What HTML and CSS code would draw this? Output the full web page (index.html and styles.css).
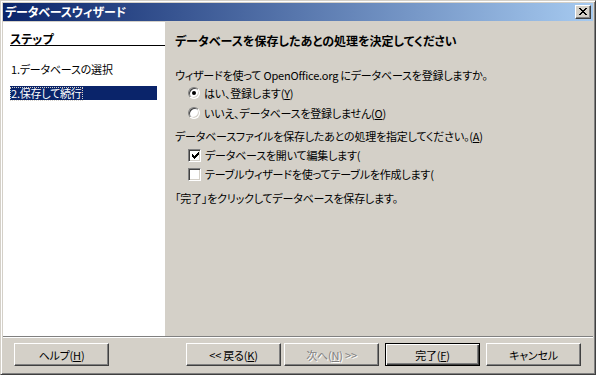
FILE: index.html
```html
<!DOCTYPE html>
<html lang="ja">
<head>
<meta charset="utf-8">
<link rel="stylesheet" href="styles.css">
</head>
<body>
<div class="window">
  <div class="titlebar">
    <span class="title">データベースウィザード</span>
    <span class="close">
      <svg width="8" height="7" viewBox="0 0 8 7" shape-rendering="crispEdges">
        <path fill="#000" d="M0 0h2v1H0zM6 0h2v1H6zM1 1h2v1H1zM5 1h2v1H5zM2 2h4v1H2zM3 3h2v1H3zM2 4h4v1H2zM1 5h2v1H1zM5 5h2v1H5zM0 6h2v1H0zM6 6h2v1H6z"/>
      </svg>
    </span>
  </div>
  <div class="main">
    <div class="steps">
      <div class="steps-head">ステップ</div>
      <div class="step step-first">1.データベースの選択</div>
      <div class="step step-selected"><span class="focus">2.保存して続行</span></div>
    </div>
    <div class="content">
      <div class="heading">データベースを保存したあとの処理を決定してください</div>
      <div class="line line-1">ウィザードを使って OpenOffice.org にデータベースを登録しますか。</div>
      <div class="opt opt-r1"><span class="radio radio-on"></span>はい、登録します(<u>Y</u>)</div>
      <div class="opt opt-r2"><span class="radio"></span>いいえ、データベースを登録しません(<u>O</u>)</div>
      <div class="line line-2">データベースファイルを保存したあとの処理を指定してください。(<u>A</u>)</div>
      <div class="opt opt-c1"><span class="check"><svg width="7" height="7" viewBox="0 0 7 7" shape-rendering="crispEdges"><path fill="#000" d="M6 0h1v3H6zM5 1h1v3H5zM4 2h1v3H4zM3 3h1v3H3zM2 4h1v3H2zM1 3h1v3H1zM0 2h1v3H0z"/></svg></span>データベースを開いて編集します(</div>
      <div class="opt opt-c2"><span class="check"></span>テーブルウィザードを使ってテーブルを作成します(</div>
      <div class="line line-3">「完了」をクリックしてデータベースを保存します。</div>
    </div>
  </div>
  <div class="sep"></div>
  <div class="buttons">
    <span class="btn btn-help">ヘルプ(<u>H</u>)</span>
    <span class="btn btn-back">&lt;&lt; 戻る(<u>K</u>)</span>
    <span class="btn btn-next btn-disabled">次へ(<u>N</u>) &gt;&gt;</span>
    <span class="btn btn-finish btn-default">完了(<u>F</u>)</span>
    <span class="btn btn-cancel">キャンセル</span>
  </div>
</div>
</body>
</html>
```
FILE: styles.css
```css
* { box-sizing: border-box; }
html, body {
  margin: 0;
  padding: 0;
  background: #d4d0c8;
}
body {
  font-family: "Noto Sans CJK JP", sans-serif;
  font-size: 11px;
  font-feature-settings: "palt";
  letter-spacing: -0.2px;
  color: #000;
}
u { text-decoration: underline; text-underline-offset: 1px; }
.window {
  width: 596px;
  height: 375px;
  background: #d4d0c8;
  border: 1px solid;
  border-color: #d4d0c8 #404040 #404040 #d4d0c8;
  box-shadow: inset 1px 1px #fff, inset -1px -1px #808080;
  padding: 2px;
  display: flex;
  flex-direction: column;
}
.titlebar {
  height: 18px;
  flex: none;
  background: linear-gradient(to right, #0a246a, #a6caf0);
  display: flex;
  align-items: center;
  justify-content: space-between;
  padding: 0 2px 0 2px;
}
.title {
  color: #fff;
  font-weight: bold;
  font-size: 12px;
  line-height: 18px;
  letter-spacing: -0.2px;
}
.close {
  width: 16px;
  height: 14px;
  background: #d4d0c8;
  border: 1px solid;
  border-color: #fff #404040 #404040 #fff;
  box-shadow: inset -1px -1px #808080;
  display: flex;
  align-items: center;
  justify-content: center;
  padding: 0 1px 1px 0;
}
.close svg { display: block; }
.main {
  margin-top: 1px;
  height: 314px;
  flex: none;
  display: flex;
}
.steps {
  width: 162px;
  flex: none;
  background: #fff;
  padding-top: 10px;
}
.steps-head {
  font-weight: bold;
  font-size: 12px;
  letter-spacing: 0;
  height: 14px;
  line-height: 13px;
  margin-left: 7px;
  border-bottom: 1px solid #000;
}
.step {
  height: 14px;
  line-height: 14px;
  margin-left: 7px;
  margin-right: 8px;
  padding-left: 1px;
  white-space: nowrap;
}
.step-first { margin-top: 16px; }
.step-selected {
  margin-top: 10px;
  background: #0a246a;
  color: #fff;
  padding-left: 0;
}
.focus {
  display: inline-block;
  height: 14px;
  line-height: 12px;
  outline: 1px dotted #d4d0c8;
  outline-offset: -1px;
  padding: 0 1px;
}
.content {
  flex: 1;
  padding-left: 10px;
  padding-top: 11px;
}
.heading {
  font-weight: bold;
  font-size: 12px;
  letter-spacing: 0;
  height: 15px;
  line-height: 15px;
  white-space: nowrap;
}
.line, .opt {
  height: 16px;
  line-height: 16px;
  white-space: nowrap;
}
.line-1 { margin-top: 19px; }
.opt-r1 { margin-top: 2px; }
.opt-r2 { margin-top: 4px; }
.line-2 { margin-top: 7px; }
.opt-c1 { margin-top: 3px; }
.opt-c2 { margin-top: 3px; }
.line-3 { margin-top: 8px; }
.opt {
  display: flex;
  align-items: center;
  padding-left: 13px;
}
.radio {
  width: 12px;
  height: 12px;
  flex: none;
  border-radius: 50%;
  background: #fff;
  border: 1px solid;
  border-color: #808080 #fff #fff #808080;
  box-shadow: inset 1px 1px #404040, inset -1px -1px #d4d0c8;
  margin-right: 4px;
  display: flex;
  align-items: center;
  justify-content: center;
}
.radio-on::after {
  content: "";
  width: 4px;
  height: 4px;
  border-radius: 50%;
  background: #000;
}
.check {
  width: 13px;
  height: 13px;
  flex: none;
  background: #fff;
  border: 1px solid;
  border-color: #808080 #fff #fff #808080;
  box-shadow: inset 1px 1px #404040, inset -1px -1px #d4d0c8;
  margin-right: 4px;
  display: flex;
  align-items: center;
  justify-content: center;
}
.check svg { display: block; margin: 1px 0 0 1px; }
.sep {
  height: 2px;
  flex: none;
  border-top: 1px solid #808080;
  border-bottom: 1px solid #fff;
}
.buttons {
  display: flex;
  padding-top: 5px;
  padding-left: 11px;
}
.btn {
  width: 95px;
  height: 23px;
  flex: none;
  display: flex;
  align-items: center;
  justify-content: center;
  border: 1px solid;
  border-color: #fff #404040 #404040 #fff;
  box-shadow: inset -1px -1px #808080, inset 1px 1px #d4d0c8;
  line-height: 14px;
  white-space: nowrap;
}
.btn-back { margin-left: 77px; }
.btn-next { margin-left: 3px; }
.btn-finish { margin-left: 6px; }
.btn-cancel { margin-left: 6px; }
.btn-disabled {
  color: #808080;
  text-shadow: 1px 1px #fff;
}
.btn-default {
  border-color: #000;
  box-shadow: inset 1px 1px #fff, inset -1px -1px #404040, inset -2px -2px #808080;
}
```
